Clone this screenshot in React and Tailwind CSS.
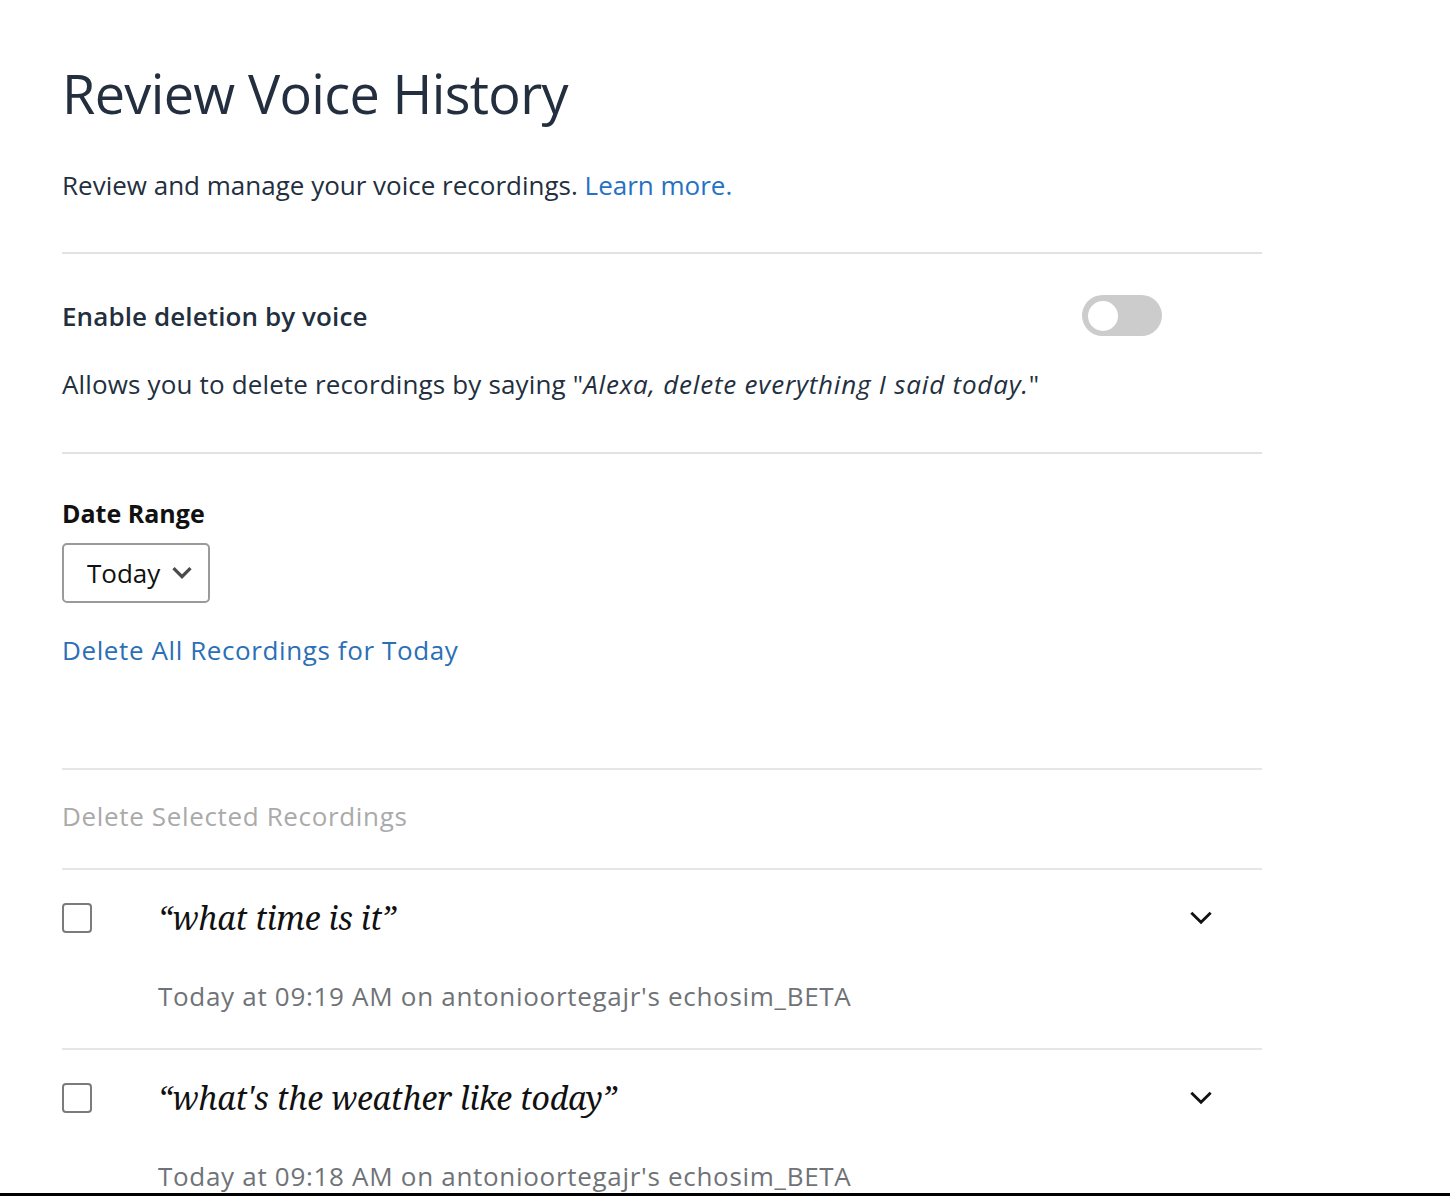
import React from "react";

const sans = { fontFamily: '"Open Sans", "Noto Sans", Arial, sans-serif' };
const serif = { fontFamily: '"Noto Serif", "DejaVu Serif", "Liberation Serif", serif' };

function Chevron({ className = "", stroke = 3 }) {
  return (
    <svg viewBox="0 0 24 24" className={className} fill="none" stroke="currentColor" strokeWidth={stroke} strokeLinecap="square" strokeLinejoin="miter">
      <path d="M4 8l8 8 8-8" />
    </svg>
  );
}

function Recording({ text, time, last }) {
  return (
    <div className={last ? "" : "border-b-2 border-[#e6e6e6]"}>
      <div className="flex pt-[26px] pb-[34px]">
        <div className="w-[96px] pt-[7px]">
          <div className="w-[30px] h-[30px] rounded-[4px] border-2 border-[#7b7b7b] bg-white" />
        </div>
        <div className="flex-1">
          <div className="flex items-center justify-between">
            <div className="text-[32px] leading-[44px] italic text-[#111] tracking-[-0.2px]" style={serif}>{text}</div>
            <Chevron className="w-[26px] h-[26px] text-[#111] mr-[48px]" stroke={2.6} />
          </div>
          <div className="mt-[38px] text-[26px] leading-[36px] text-[#6f7377] tracking-[0.7px]">{time}</div>
        </div>
      </div>
    </div>
  );
}

export default function App() {
  return (
    <div className="h-[1196px] overflow-hidden flex flex-col bg-white" style={sans}>
      <div className="flex-1 overflow-hidden">
        <div className="pl-[62px] w-[1262px] text-[#232f3e]">
          <h1 className="pt-[63px] text-[54px] leading-[60px] font-normal tracking-[-0.65px]">Review Voice History</h1>
          <p className="mt-[44px] text-[26px] leading-[36px]">
            Review and manage your voice recordings. <span className="text-[#2571c4]">Learn more.</span>
          </p>
          <div className="mt-[49px] h-[2px] bg-[#e2e2e2]" />
          <div className="mt-[41px] flex items-center justify-between h-[41px]">
            <div className="text-[26px] leading-[36px] font-semibold tracking-[0.1px]">Enable deletion by voice</div>
            <div className="mr-[100px] w-[80px] h-[41px] rounded-full bg-[#cccccc] flex items-center pl-[6px]">
              <div className="w-[30px] h-[30px] rounded-full bg-white" />
            </div>
          </div>
          <p className="mt-[30px] text-[26px] leading-[36px] tracking-[0.15px]">
            Allows you to delete recordings by saying "<span className="italic tracking-[0.8px]">Alexa, delete everything I said today.</span>"
          </p>
          <div className="mt-[50px] h-[2px] bg-[#e2e2e2]" />
          <div className="mt-[43px] text-[25px] leading-[32px] font-bold text-[#111]">Date Range</div>
          <div className="mt-[14px] w-[148px] h-[60px] rounded-[5px] border-2 border-[#9a9a9a] flex items-center pl-[23px] gap-[11px]">
            <span className="text-[26px] leading-[36px] text-[#111]">Today</span>
            <Chevron className="w-[22px] h-[22px] text-[#4a4a4a]" stroke={3.6} />
          </div>
          <div className="mt-[29px] text-[26px] leading-[36px] text-[#2b6fb6] tracking-[0.6px]">Delete All Recordings for Today</div>
          <div className="mt-[100px] h-[2px] bg-[#e6e6e6]" />
          <div className="mt-[28px] text-[26px] leading-[36px] text-[#aaaaaa] tracking-[0.65px]">Delete Selected Recordings</div>
          <div className="mt-[34px] h-[2px] bg-[#e6e6e6]" />
          <Recording text="“what time is it”" time="Today at 09:19 AM on antonioortegajr's echosim_BETA" />
          <Recording text="“what's the weather like today”" time="Today at 09:18 AM on antonioortegajr's echosim_BETA" last />
        </div>
      </div>
      <div className="h-[3px] bg-black" />
    </div>
  );
}
